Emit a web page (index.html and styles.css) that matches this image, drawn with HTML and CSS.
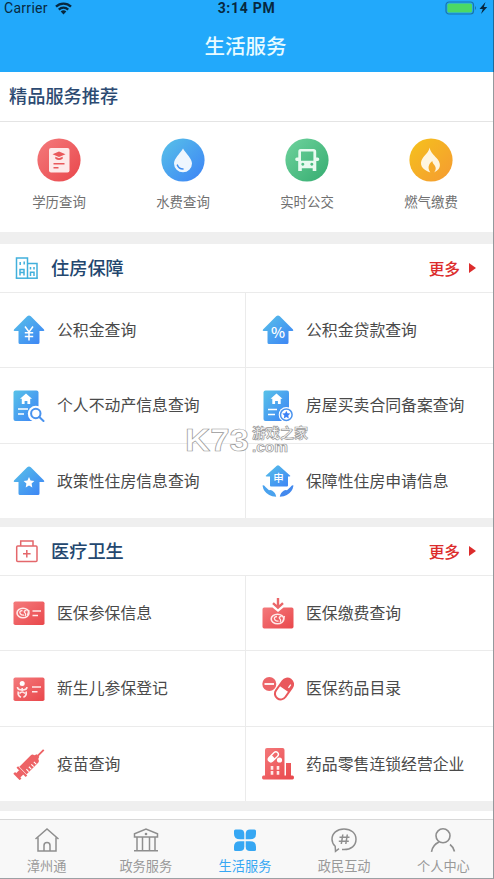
FILE: index.html
```html
<!DOCTYPE html>
<html lang="zh-CN">

<head>
    <meta charset="UTF-8">
    <meta name="viewport" content="width=device-width, initial-scale=1.0">
    <title>生活服务</title>
    <link rel="stylesheet" href="styles.css">
</head>

<body>

    <!-- Shared gradients for the icons -->
    <svg class="defs" width="0" height="0">
        <defs>
            <linearGradient id="blue" x1="0" y1="0" x2="1" y2="1">
                <stop offset="0" stop-color="#58c2e8" />
                <stop offset="1" stop-color="#3c82f6" />
            </linearGradient>
            <linearGradient id="red" x1="0" y1="0" x2="1" y2="1">
                <stop offset="0" stop-color="#f47a7c" />
                <stop offset="1" stop-color="#e9474b" />
            </linearGradient>
            <linearGradient id="green" x1="0" y1="0" x2="1" y2="1">
                <stop offset="0" stop-color="#6fd39d" />
                <stop offset="1" stop-color="#35ac70" />
            </linearGradient>
            <linearGradient id="orange" x1="0" y1="0" x2="1" y2="1">
                <stop offset="0" stop-color="#f5c21c" />
                <stop offset="1" stop-color="#f59a32" />
            </linearGradient>
        </defs>
    </svg>

    <div class="phone">

        <header class="header">
            <div class="status-bar">
                <div class="carrier">
                    <span>Carrier</span>
                    <svg width="17" height="13" viewBox="0 0 17 13" fill="none" stroke="#07283f" stroke-width="2.3">
                        <path d="M1 4.6a10.7 10.7 0 0 1 15 0" />
                        <path d="M3.8 7.6a6.7 6.7 0 0 1 9.4 0" />
                        <path d="M8.5 12.4L5.7 9.6a4 4 0 0 1 5.6 0z" fill="#07283f" stroke="none" />
                    </svg>
                </div>
                <span class="time">3:14 PM</span>
                <svg class="battery" width="44" height="14" viewBox="0 0 44 14">
                    <rect x="1" y="1" width="27.5" height="12" rx="3" fill="none" stroke="#1a76a9" stroke-width="1.2" />
                    <rect x="2.4" y="2.4" width="24.7" height="9.2" rx="1.6" fill="#4cd964" />
                    <path d="M30 5q2 2 0 4z" fill="#1a76a9" />
                    <path d="M40.5 1l-6 7h3.3l-1.8 5 6.2-7h-3.3z" fill="#07283f" />
                </svg>
            </div>
            <h1>生活服务</h1>
        </header>

        <h2 class="recommend-title">精品服务推荐</h2>

        <div class="services">
            <a class="service">
                <svg width="44" height="44" viewBox="0 0 44 44">
                    <circle cx="22" cy="22" r="21.6" fill="url(#red)" />
                    <rect x="12" y="10" width="20.5" height="24.5" rx="2" fill="#fdeaea" />
                    <path d="M22 13.5l-6.5 2.8 6.5 2.8 6.5-2.8zM18.3 18.8v2q3.7 2.4 7.4 0v-2L22 20.3z" fill="#e9595b" />
                    <path d="M16.5 25.8h11M16.5 29.8h5" stroke="#e9595b" stroke-width="1.5" />
                </svg>
                <span>学历查询</span>
            </a>
            <a class="service">
                <svg width="44" height="44" viewBox="0 0 44 44">
                    <circle cx="22" cy="22" r="21.6" fill="url(#blue)" />
                    <path d="M22 10.5c3 5 9 10 9 15a9 8.8 0 0 1-18 0c0-5 6-10 9-15z" fill="#eef6fe" />
                    <path d="M16.4 27.2q1.6 3.7 5.6 3.8" fill="none" stroke="#3f8df2" stroke-width="1.6" stroke-linecap="round" />
                </svg>
                <span>水费查询</span>
            </a>
            <a class="service">
                <svg width="44" height="44" viewBox="0 0 44 44">
                    <circle cx="22" cy="22" r="21.6" fill="url(#green)" />
                    <path fill="#e8faf0" fill-rule="evenodd" d="M15.5 11h13q2.7 0 2.7 2.7v5.8h1.5q1.6 0 1.6 1.8t-1.6 1.8h-1.4v10h-3.6v-2.8H16.8v2.8h-3.6v-10h-1.4q-1.6 0-1.6-1.8t1.6-1.8h1.5v-5.8Q13.3 11 15.5 11zM16 13.4v9.4h12.4v-9.4zM17.8 24.8a1.5 1.5 0 1 0 .01 0zM26.8 24.8a1.5 1.5 0 1 0 .01 0z" />
                </svg>
                <span>实时公交</span>
            </a>
            <a class="service">
                <svg width="44" height="44" viewBox="0 0 44 44">
                    <circle cx="22" cy="22" r="21.6" fill="url(#orange)" />
                    <path fill="#fff6e0" d="M20.5 9.500c1 5 4.500 7.500 7 10.500 3.500 4 6.500 10-2.500 14.500 3-3.500 1.500-6.500-.5-8.500-.8-1-1-2-1.200-3-3 2.500-5.500 6-2 11.500C12.500 31.500 10 26 13.500 20.500c2-3.500 6.500-6 7-11z" />
                </svg>
                <span>燃气缴费</span>
            </a>
        </div>

        <section class="section">
            <div class="section-head">
                <svg width="24" height="24" viewBox="0 0 24 24" fill="none" stroke="#41b0dc" stroke-width="1.5">
                    <path d="M1.5 22.5V2h11v20.5M12.5 7.5h9.500v15" />
                    <path d="M.8 22.200h22" />
                    <path d="M5 19.500v-6h4v6M9.200 5.500v3M5.200 6v3M5 16.500h4M15.500 20v-3.800h3.500V20M15.500 11v2.500M19 11v2.500" />
                </svg>
                <h2>住房保障</h2>
                <a class="more">更多<i class="arrow"></i></a>
            </div>
            <div class="grid">
                <a class="item">
                    <svg width="32" height="32" viewBox="0 0 32 32">
                        <path d="M14.200 2.200q1.800-1.400 3.600 0L31 15.500q1 1.500-.8 1.500H26.500v11.500q0 1.500-1.500 1.500H7q-1.500 0-1.500-1.500V17H1.800Q0 17 1 15.500z" fill="url(#blue)" />
                        <path d="M12 12.500l4 5.500 4-5.500M16 18v8.500M11.800 18.800h8.400M11.800 22.500h8.400" fill="none" stroke="#fff" stroke-width="1.500" />
                    </svg>
                    <span>公积金查询</span>
                </a>
                <a class="item">
                    <svg width="32" height="32" viewBox="0 0 32 32">
                        <path d="M14.200 2.200q1.800-1.400 3.600 0L31 15.500q1 1.500-.8 1.500H26.500v11.500q0 1.500-1.500 1.500H7q-1.500 0-1.500-1.500V17H1.800Q0 17 1 15.500z" fill="url(#blue)" />
                        <text class="glyph" x="16" y="23.500" font-size="15">%</text>
                    </svg>
                    <span>公积金贷款查询</span>
                </a>
                <a class="item">
                    <svg width="32" height="32" viewBox="0 0 32 32">
                        <rect x="0.500" y="0.500" width="25" height="30.500" rx="2" fill="url(#blue)" />
                        <path d="M13 3.500l6 5.200h-1.800v5.300h-2.800v-3h-2.800v3H8.800V8.700H7z" fill="#fff" />
                        <path d="M5 19h10M5 24h6" stroke="#fff" stroke-width="1.600" />
                        <circle cx="22.800" cy="23.800" r="8" fill="#fff" />
                        <circle cx="22.800" cy="23.500" r="4.700" fill="#fff" stroke="#4a93ee" stroke-width="2" />
                        <path d="M26.300 27l4.200 4" stroke="#4a93ee" stroke-width="2" stroke-linecap="round" />
                    </svg>
                    <span>个人不动产信息查询</span>
                </a>
                <a class="item">
                    <svg width="32" height="32" viewBox="0 0 32 32">
                        <rect x="1.500" y="0.500" width="25.500" height="30.500" rx="2" fill="url(#blue)" />
                        <path d="M14.500 3.500l6 5.200h-1.800v5.300h-2.800v-3h-2.800v3h-2.800V8.700H8.500z" fill="#fff" />
                        <path d="M6 19.500h9M6 24.500h7" stroke="#fff" stroke-width="1.600" />
                        <circle cx="24.300" cy="24.700" r="7.600" fill="#fff" />
                        <circle cx="24.300" cy="24.700" r="5.800" fill="#fff" stroke="#4a93ee" stroke-width="1.500" />
                        <path d="M24.300 20.700l1.200 2.500 2.800.4-2 2 .5 2.800-2.500-1.300-2.500 1.300.5-2.800-2-2 2.800-.4z" fill="#3c82f6" />
                    </svg>
                    <span>房屋买卖合同备案查询</span>
                </a>
                <a class="item">
                    <svg width="32" height="32" viewBox="0 0 32 32">
                        <path d="M14.200 2.200q1.800-1.400 3.600 0L31 15.500q1 1.500-.8 1.500H26.500v11.500q0 1.500-1.500 1.500H7q-1.500 0-1.500-1.500V17H1.800Q0 17 1 15.500z" fill="url(#blue)" />
                        <path d="M16 12l1.600 3.500 3.800.5-2.800 2.600.7 3.900-3.300-1.900-3.300 1.900.7-3.900-2.800-2.600 3.800-.5z" fill="#fff" />
                    </svg>
                    <span>政策性住房信息查询</span>
                </a>
                <a class="item">
                    <svg width="32" height="32" viewBox="0 0 32 32">
                        <path d="M14.800.800q1.200-1 2.400 0L28 10.500q.8 1-.5 1H26v9q0 1-1 1H9q-1 0-1-1v-9H4.500q-1.300 0-.5-1z" fill="url(#blue)" />
                        <text class="glyph" x="16.500" y="16.500" font-size="10.500">申</text>
                        <path d="M.5 20.500q1.500-1 3 1.500l3.500 3.200q1.500-.7 3 .3 3.500 2 4.200 6.300-4.500-.3-7-1.800Q1.500 27 .5 20.500z" fill="#4aa2ee" />
                        <path d="M31.500 20.500q-1.500-1-3 1.500L25 25.200q-1.500-.7-3 .3-3.500 2-4.200 6.300 4.500-.3 7-1.800 5.700-3 6.700-9.500z" fill="#4389ee" />
                    </svg>
                    <span>保障性住房申请信息</span>
                </a>
            </div>
        </section>

        <section class="section section-health">
            <div class="section-head">
                <svg width="24" height="24" viewBox="0 0 24 24" fill="none" stroke="#e4676b" stroke-width="1.500">
                    <rect x="1.700" y="7" width="20.300" height="15.500" rx="1" />
                    <path d="M5.700 7V2h12.300v5M11.800 11v7.500M8 14.800h7.600" />
                </svg>
                <h2>医疗卫生</h2>
                <a class="more">更多<i class="arrow"></i></a>
            </div>
            <div class="grid">
                <a class="item">
                    <svg width="32" height="32" viewBox="0 0 32 32">
                        <rect x="0.500" y="4.500" width="31" height="23.500" rx="1.800" fill="url(#red)" />
                        <ellipse cx="10" cy="16" rx="6" ry="4.700" fill="none" stroke="#ffe9e9" stroke-width="1.600" />
                        <path d="M9.500 13.500q-4 .5-2 3.500 1.500 1.500 3.500 1M13.500 13.500q-3 0-2 2 2 1.500.5 3.500M16 13l-1.500 5" fill="none" stroke="#ffe9e9" stroke-width="1.300" />
                        <path d="M19.500 14h8.500M19.500 18.500h5.500" stroke="#ffe9e9" stroke-width="1.600" />
                    </svg>
                    <span>医保参保信息</span>
                </a>
                <a class="item">
                    <svg width="32" height="32" viewBox="0 0 32 32">
                        <path d="M2.200 10.500H10.500l5.500 4.500 5.500-4.500H29.800q1.700 0 1.700 1.700v17.600q0 1.700-1.700 1.700H2.200q-1.700 0-1.700-1.700V12.200q0-1.700 1.700-1.700z" fill="url(#red)" />
                        <path d="M16 1v9M11 6.200l5 4.500 5-4.500" fill="none" stroke="#ea6669" stroke-width="2.400" />
                        <ellipse cx="15.500" cy="22" rx="6.300" ry="4.700" fill="none" stroke="#ffe9e9" stroke-width="1.600" />
                        <path d="M15 19.500q-4 .5-2 3.500 1.500 1.500 3.500 1M19.500 19.500q-3 0-2 2 2 1.500.5 3.500M22.500 19l-1.500 5" fill="none" stroke="#ffe9e9" stroke-width="1.300" />
                    </svg>
                    <span>医保缴费查询</span>
                </a>
                <a class="item">
                    <svg width="32" height="32" viewBox="0 0 32 32">
                        <rect x="0.500" y="4.500" width="31" height="23.500" rx="1.800" fill="url(#red)" />
                        <circle cx="9.200" cy="10.500" r="2.500" fill="#fff" />
                        <path d="M4.500 14q0 3 4.700 3t4.700-3M9.200 15v3" fill="none" stroke="#ffe9e9" stroke-width="1.700" />
                        <path d="M5.300 18.500q-.8 4.500 2.700 5.700M13.100 18.500q.8 4.500-2.700 5.700M6.500 20.500q2.700-3 5.400 0" fill="none" stroke="#ffe9e9" stroke-width="1.700" />
                        <path d="M19 14h9M19 18.800h5.500" stroke="#ffe9e9" stroke-width="1.600" />
                    </svg>
                    <span>新生儿参保登记</span>
                </a>
                <a class="item">
                    <svg width="32" height="32" viewBox="0 0 32 32">
                        <circle cx="7.300" cy="11" r="7" fill="#ec6468" />
                        <path d="M2.500 11h9.500" stroke="#fff" stroke-width="1.800" />
                        <g transform="rotate(35 22 16)">
                            <rect x="15.500" y="3.500" width="13" height="25" rx="6.500" fill="#fff" stroke="#fff" stroke-width="2" />
                            <rect x="16.250" y="4.500" width="11.500" height="23" rx="5.750" fill="#fff" stroke="#e9585c" stroke-width="2" />
                            <path d="M16.250 16v-5.750a5.750 5.750 0 0 1 11.500 0V16z" fill="#e9585c" />
                            <path d="M25 8.500v4" stroke="#fff" stroke-width="1.200" />
                        </g>
                    </svg>
                    <span>医保药品目录</span>
                </a>
                <a class="item">
                    <svg width="32" height="32" viewBox="0 0 32 32">
                        <g transform="translate(3.500 29) rotate(-45)" fill="#ed6265">
                            <rect x="0" y="-4.500" width="2.500" height="9" />
                            <rect x="2" y="-3" width="5" height="6" />
                            <rect x="6.500" y="-6.500" width="2.200" height="13" />
                            <path d="M9.200-5.200H25.500q2 0 2.500 2.500l2.500 1v3.400l-2.500 1Q27.500 5.200 25.500 5.200H9.200z" />
                            <rect x="30" y="-.9" width="8.500" height="1.800" />
                            <path d="M12.500 1.500v3.300M16 1.500v3.300M19.500 1.500v3.300M23 1.500v3.300" stroke="#fff" stroke-width="1.100" />
                        </g>
                    </svg>
                    <span>疫苗查询</span>
                </a>
                <a class="item">
                    <svg width="32" height="32" viewBox="0 0 32 32">
                        <path d="M5 0h15.500q2 0 2 2v25.500H24V15h5v12.500h1.500q1.500 0 1.500 2t-1.500 2h-29Q0 31.500 0 29.500t1.500-2H3V2q0-2 2-2z" fill="url(#red)" />
                        <g transform="rotate(45 11.500 9)">
                            <rect x="8.800" y="3" width="5" height="12" rx="2.500" fill="none" stroke="#fff" stroke-width="1.400" />
                            <path d="M8.800 9h5v3.500a2.500 2.500 0 0 1-5 0z" fill="#fff" />
                        </g>
                        <circle cx="17.500" cy="12" r="2.600" fill="#fff" />
                        <path d="M10 18v9M16 18v9" stroke="#ffe9e9" stroke-width="2.600" stroke-dasharray="3.800 1.200" />
                    </svg>
                    <span>药品零售连锁经营企业</span>
                </a>
            </div>
        </section>

        <nav class="tab-bar">
            <a class="tab">
                <svg width="26" height="26" viewBox="0 0 26 26" fill="none" stroke="#8e8e8e" stroke-width="1.500">
                    <path d="M1.500 12L13 2l11.500 10M4 10.500V24h18V10.500M10 24v-5.500a3 3 0 0 1 6 0V24" />
                </svg>
                <span>漳州通</span>
            </a>
            <a class="tab">
                <svg width="26" height="26" viewBox="0 0 26 26" fill="none" stroke="#8e8e8e" stroke-width="1.500">
                    <path d="M1.500 10V6.800L13 2l11.500 4.800V10zM4 10v13M9.500 10v13M16.500 10v13M22 10v13M1 23.800h24" />
                    <circle cx="13" cy="7" r="1.300" fill="#8e8e8e" stroke="none" />
                </svg>
                <span>政务服务</span>
            </a>
            <a class="tab active">
                <svg width="26" height="26" viewBox="0 0 26 26" fill="#36a7f3">
                    <path d="M2 4q0-1.500 1.500-1.500H8q4.300 0 4.300 4.300v5.500H8Q2 12.300 2 7z" />
                    <path d="M24 4q0-1.500-1.500-1.500H18q-4.300 0-4.300 4.300v5.500H18q6 0 6-5.300z" />
                    <path d="M2 22.500Q2 24 3.500 24H8q4.300 0 4.300-4.300v-5.400H8q-6 0-6 5.200z" />
                    <path d="M24 22.500q0 1.500-1.500 1.500H18q-4.300 0-4.300-4.300v-5.400H18q6 0 6 5.200z" />
                </svg>
                <span>生活服务</span>
            </a>
            <a class="tab">
                <svg width="26" height="26" viewBox="0 0 26 26" fill="none" stroke="#8e8e8e" stroke-width="1.500">
                    <path d="M11 22.600l2 0c7 0 12-4 12-10.300S20 2 13 2 1 6.200 1 12.300c0 3 1.200 5.200 3.200 7l.3 5 3.500-2.600" />
                    <path d="M11.800 7.500L10.300 17M16.300 7.500L14.800 17M8.500 10.300h10M7.800 14.300h10" />
                </svg>
                <span>政民互动</span>
            </a>
            <a class="tab">
                <svg width="26" height="26" viewBox="0 0 26 26" fill="none" stroke="#8e8e8e" stroke-width="1.600">
                    <circle cx="13" cy="8.800" r="7" />
                    <path d="M9 15Q2.500 18 1.500 24.800M20 17.500q3.500 2.500 4.500 7" />
                </svg>
                <span>个人中心</span>
            </a>
        </nav>

        <div class="watermark">
            <svg width="130" height="44" viewBox="0 0 130 44">
                <text x="2" y="32" font-size="32" textLength="64" lengthAdjust="spacingAndGlyphs">K73</text>
                <text x="69" y="18.500" font-size="14">游戏之家</text>
                <text x="69" y="33" font-size="14" textLength="36" lengthAdjust="spacingAndGlyphs">.com</text>
            </svg>
        </div>
    </div>

</body>

</html>
```
FILE: styles.css
```css
* {
    box-sizing: border-box;
}

body {
    font-family: "Noto Sans CJK SC", sans-serif;
    margin: 0;
    padding: 0;
    height: 100vh;
    overflow: hidden;
    background: #fff;
}

h1,
h2 {
    margin: 0;
    font-weight: 500;
}

svg {
    display: block;
    flex-shrink: 0;
}

.defs {
    position: absolute;
}

/* The screen is slightly wider than the window */
.phone {
    position: relative;
    display: flex;
    flex-direction: column;
    width: 497px;
    height: 879px;
    margin-left: -3px;
    padding-right: 1px;
    overflow: hidden;
}

.phone::after {
    content: "";
    position: absolute;
    inset: 0;
    border-right: 1px solid rgba(20, 30, 40, 0.45);
    border-bottom: 1px solid rgba(20, 30, 40, 0.4);
    pointer-events: none;
}

/* Header */
.header {
    height: 72px;
    margin-right: -1px;
    background: #22a9fb;
    color: #e9fbff;
    text-align: center;
}

.status-bar {
    display: grid;
    grid-template-columns: 1fr auto 1fr;
    align-items: center;
    height: 16px;
    padding: 0 5px 0 7px;
    color: #07283f;
    font-family: Roboto, sans-serif;
    font-size: 14px;
    line-height: 16px;
}

.carrier {
    display: flex;
    align-items: center;
    gap: 7px;
    letter-spacing: 0.3px;
}

.time {
    font-weight: 700;
    letter-spacing: 0.7px;
}

.battery {
    justify-self: end;
}

h1 {
    font-size: 20.5px;
    line-height: 58px;
}

/* Recommended services */
.recommend-title {
    height: 50px;
    padding-left: 12px;
    border-bottom: 1px solid #e4e4e4;
    color: #2c4a72;
    font-size: 18.2px;
    line-height: 47px;
}

.services {
    display: grid;
    grid-template-columns: repeat(4, 1fr);
    height: 110px;
    padding-top: 16px;
}

.service {
    display: flex;
    flex-direction: column;
    align-items: center;
    gap: 9px;
    color: #707070;
    font-size: 13.4px;
    line-height: 20px;
}

/* Sections */
.section {
    border-top: 12px solid #efefef;
}

.section-health {
    border-top-width: 9px;
    border-bottom: 10px solid #efefef;
}

.section-head {
    display: flex;
    align-items: center;
    height: 49px;
    padding: 0 17px 0 18px;
    border-bottom: 1px solid #ebebeb;
}

.section-head h2 {
    margin-left: 12px;
    padding-bottom: 2px;
    color: #23476f;
    font-size: 18.2px;
}

.more {
    display: flex;
    align-items: center;
    gap: 9px;
    margin-left: auto;
    color: #dc2c2c;
    font-size: 15.7px;
    font-weight: 500;
}

.arrow {
    border-left: 7px solid #dc2c2c;
    border-top: 5px solid transparent;
    border-bottom: 5px solid transparent;
}

.grid {
    display: grid;
    grid-template-columns: 249px 1fr;
    grid-template-rows: 75px 76px 74px;
}

.item {
    display: flex;
    align-items: center;
    gap: 12px;
    padding-left: 16px;
    border-bottom: 1px solid #ebebeb;
    color: #4a4a4a;
    font-size: 15.85px;
}

.item span {
    padding-bottom: 2px;
}

.item:nth-child(odd) {
    border-right: 1px solid #ebebeb;
}

.item:nth-last-child(-n+2) {
    border-bottom: none;
}

.glyph {
    fill: #fff;
    font-weight: 500;
    text-anchor: middle;
}

/* Bottom tabs */
.tab-bar {
    display: grid;
    grid-template-columns: repeat(5, 1fr);
    height: 60px;
    margin-top: auto;
    padding-top: 7px;
    border-top: 1px solid #d8d8d8;
    background: #f8f8f8;
}

.tab {
    display: flex;
    flex-direction: column;
    align-items: center;
    gap: 3px;
    color: #999;
    font-size: 13.2px;
    line-height: 19px;
}

.tab.active {
    color: #36a7f3;
}

.watermark {
    position: absolute;
    left: 186px;
    top: 419px;
}

.watermark text {
    fill: #fff;
    stroke: #999;
    stroke-width: 0.7px;
    font-family: "Liberation Sans", "Noto Sans CJK SC", sans-serif;
    font-weight: 700;
}
```
